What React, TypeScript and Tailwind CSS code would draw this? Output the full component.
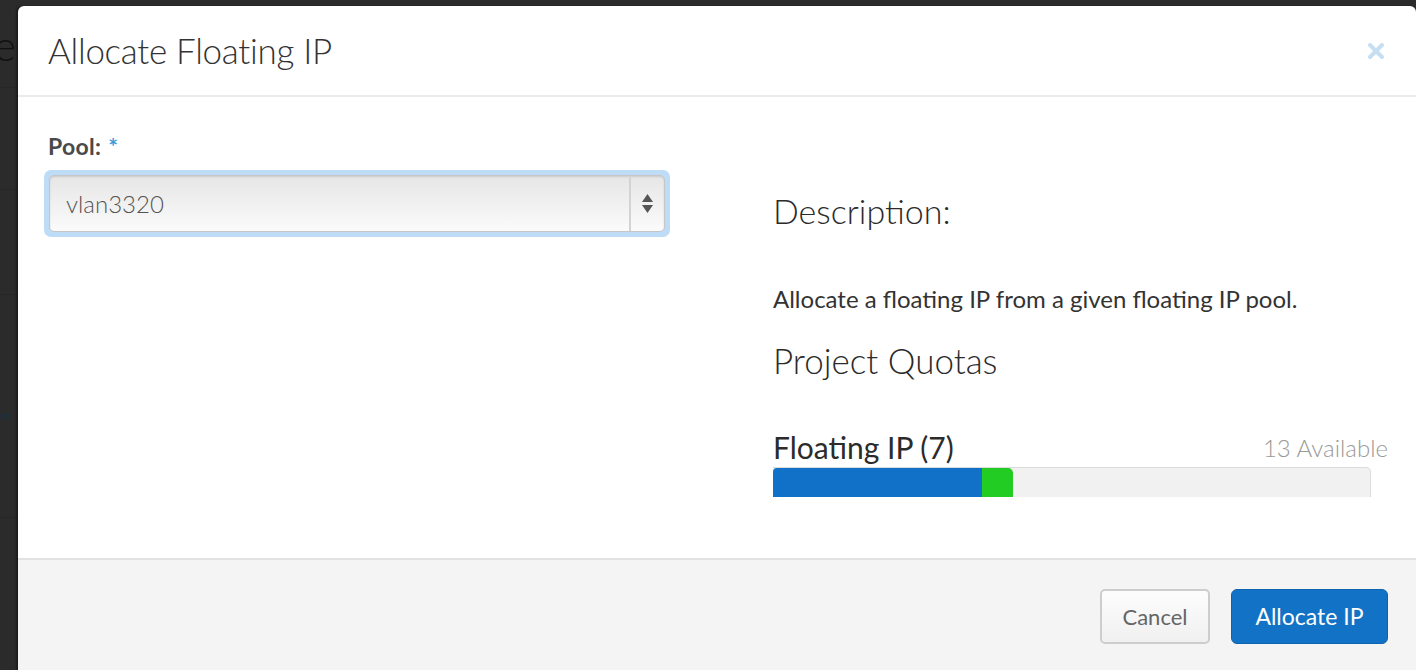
import { useState } from "react";

const font = { fontFamily: "Lato, 'Open Sans', sans-serif" };

const App = () => {
  const [pool, setPool] = useState("vlan3320");

  return (
    <div
      className="relative h-[670px] w-full overflow-hidden bg-[#2b2b2b]"
      style={font}
    >
      {/* page behind the backdrop */}
      <div className="flex w-[18px] flex-col overflow-hidden">
        <div className="h-[88px] border-b border-[#262626] pt-[24px] text-[42px] leading-none font-light text-[#111]">
          <span className="ml-[-6px]">e</span>
        </div>
        <div className="h-[102px] border-b border-[#262626]" />
        <div className="h-[105px] border-b border-[#262626]" />
        <div className="h-[223px] border-b border-[#262626] pt-[108px] text-[16px] font-bold text-[#13324f]">
          =
        </div>
      </div>

      {/* modal */}
      <div className="absolute top-[6px] left-[18px] flex h-[700px] w-[1398px] flex-col rounded-t-[6px] bg-white shadow-[-2px_0_2px_rgba(0,0,0,0.35)]">
        <div className="flex h-[91px] items-center justify-between border-b-2 border-[#ebebeb] pr-[31px] pl-[30px]">
          <h1 className="text-[35px] font-light tracking-[-0.3px] text-[#333]">
            Allocate Floating IP
          </h1>
          <button className="flex h-[18px] w-[18px] items-center justify-center">
            <svg width="18" height="18" viewBox="0 0 18 18">
              <path
                d="M3 3L15 15M15 3L3 15"
                stroke="#c6def2"
                strokeWidth="4"
                strokeLinecap="round"
              />
            </svg>
          </button>
        </div>

        <div className="flex h-[461px] px-[30px] pt-[34px]">
          <div className="w-[622px]">
            <label className="flex items-start gap-[7px] text-[23px] leading-[30px] font-bold tracking-[0.3px] text-[#4a4a4a]">
              Pool: <span className="text-[23px] text-[#3d9ad6]">*</span>
            </label>
            <div className="mt-[9px] ml-[-4px] rounded-[7px] bg-[#bfdcf7] p-[5px]">
              <div className="flex h-[57px] items-center rounded-[5px] border border-[#c6c6c6] bg-gradient-to-b from-[#e6e6e6] to-[#fbfbfb] shadow-[inset_0_1px_2px_rgba(0,0,0,0.12)]">
                <select
                  value={pool}
                  onChange={(e) => setPool(e.target.value)}
                  className="h-full flex-1 appearance-none bg-transparent pl-[16px] text-[24px] font-light text-[#555] outline-none"
                >
                  <option>vlan3320</option>
                </select>
                <div className="flex h-full w-[35px] flex-col items-center justify-center gap-[3px] border-l-2 border-[#d3d3d3]">
                  <svg width="11" height="8" viewBox="0 0 11 8">
                    <path d="M5.5 0L11 8H0z" fill="#555" />
                  </svg>
                  <svg width="11" height="8" viewBox="0 0 11 8">
                    <path d="M0 0h11L5.5 8z" fill="#555" />
                  </svg>
                </div>
              </div>
            </div>
          </div>

          <div className="mr-[-2px] ml-[103px] flex-1 pt-[58px] text-[#2b2b2b]">
            <h3 className="text-[34px] font-light leading-[44px]">
              Description:
            </h3>
            <p className="mt-[51px] text-[24px] leading-[30px] text-[#333]">
              Allocate a floating IP from a given floating IP pool.
            </p>
            <h3 className="mt-[24px] text-[35px] font-light leading-[44px]">
              Project Quotas
            </h3>
            <div className="mt-[45px] flex items-end justify-between">
              <span className="text-[30px] leading-[40px]">
                Floating IP (7)
              </span>
              <span className="text-[24px] leading-[38px] font-light text-[#999]">
                13 Available
              </span>
            </div>
            <div className="flex h-[30px] w-[598px] overflow-hidden rounded-tr-[5px] border-t border-r border-[#dcdcdc] bg-[#f1f1f1]">
              <div className="h-full w-[209px] rounded-tl-[4px] bg-[#1170c8]" />
              <div className="h-full w-[31px] rounded-tr-[5px] bg-[#22cc22]" />
            </div>
          </div>
        </div>

        <div className="flex flex-1 justify-end gap-[21px] border-t-2 border-[#e2e2e2] bg-[#f4f4f4] pt-[29px] pr-[28px]">
          <button className="h-[55px] w-[110px] rounded-[5px] border-2 border-[#cdcdcd] bg-gradient-to-b from-[#fdfdfd] to-[#f0f0f0] text-[22px] text-[#666]">
            Cancel
          </button>
          <button className="h-[55px] w-[157px] rounded-[6px] border border-[#0f62ad] bg-[#1273c6] text-[23px] text-white">
            Allocate IP
          </button>
        </div>
      </div>
    </div>
  );
};

export default App;
